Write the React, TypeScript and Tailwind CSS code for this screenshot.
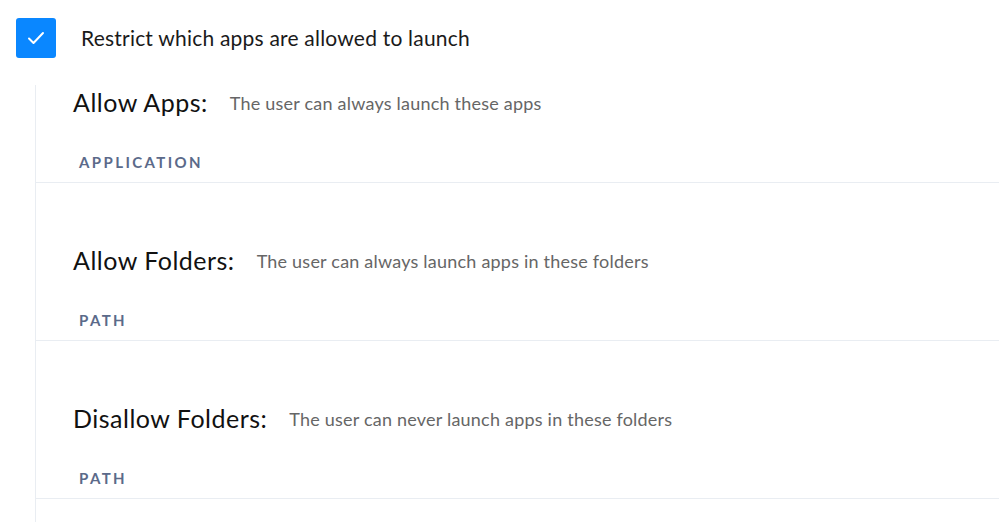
import React from 'react';

const sections = [
  { title: 'Allow Apps:', desc: 'The user can always launch these apps', column: 'APPLICATION' },
  { title: 'Allow Folders:', desc: 'The user can always launch apps in these folders', column: 'PATH' },
  { title: 'Disallow Folders:', desc: 'The user can never launch apps in these folders', column: 'PATH' },
];

function Checkbox() {
  return (
    <div className="flex h-[40px] w-[40px] shrink-0 items-center justify-center rounded-[3px] bg-[#0a87ff]">
      <svg width="18" height="14" viewBox="0 0 18 14" fill="none">
        <path d="M2 7.5 L6.5 12 L16 2" stroke="white" strokeWidth="2" strokeLinecap="round" strokeLinejoin="round" />
      </svg>
    </div>
  );
}

export default function App() {
  return (
    <div className="h-[522px] w-[999px] overflow-hidden bg-white font-['Lato',sans-serif] text-[#111]">
      {/* checkbox row */}
      <div className="flex items-center gap-[25px] pl-[16px] pt-[18px]">
        <Checkbox />
        <span className="text-[21px] tracking-[0.01em] text-[#1a1a1a]">Restrict which apps are allowed to launch</span>
      </div>

      {/* nested settings */}
      <div className="ml-[35px] mt-[27px] h-[600px] border-l border-[#e9edf2]">
        {sections.map((s) => (
          <div key={s.title} className="pb-[60px]">
            <div className="flex h-[36px] items-center gap-[22px] pl-[37px]">
              <span className="text-[25px] tracking-[0.02em] text-[#111]">{s.title}</span>
              <span className="text-[18px] tracking-[0.012em] text-[#666]">{s.desc}</span>
            </div>
            <div className="mt-[22px] flex h-[40px] items-center border-b border-[#e9edf2] pl-[43px]">
              <span className="text-[15px] font-bold tracking-[0.16em] text-[#5b6a8a]">{s.column}</span>
            </div>
          </div>
        ))}
      </div>
    </div>
  );
}
